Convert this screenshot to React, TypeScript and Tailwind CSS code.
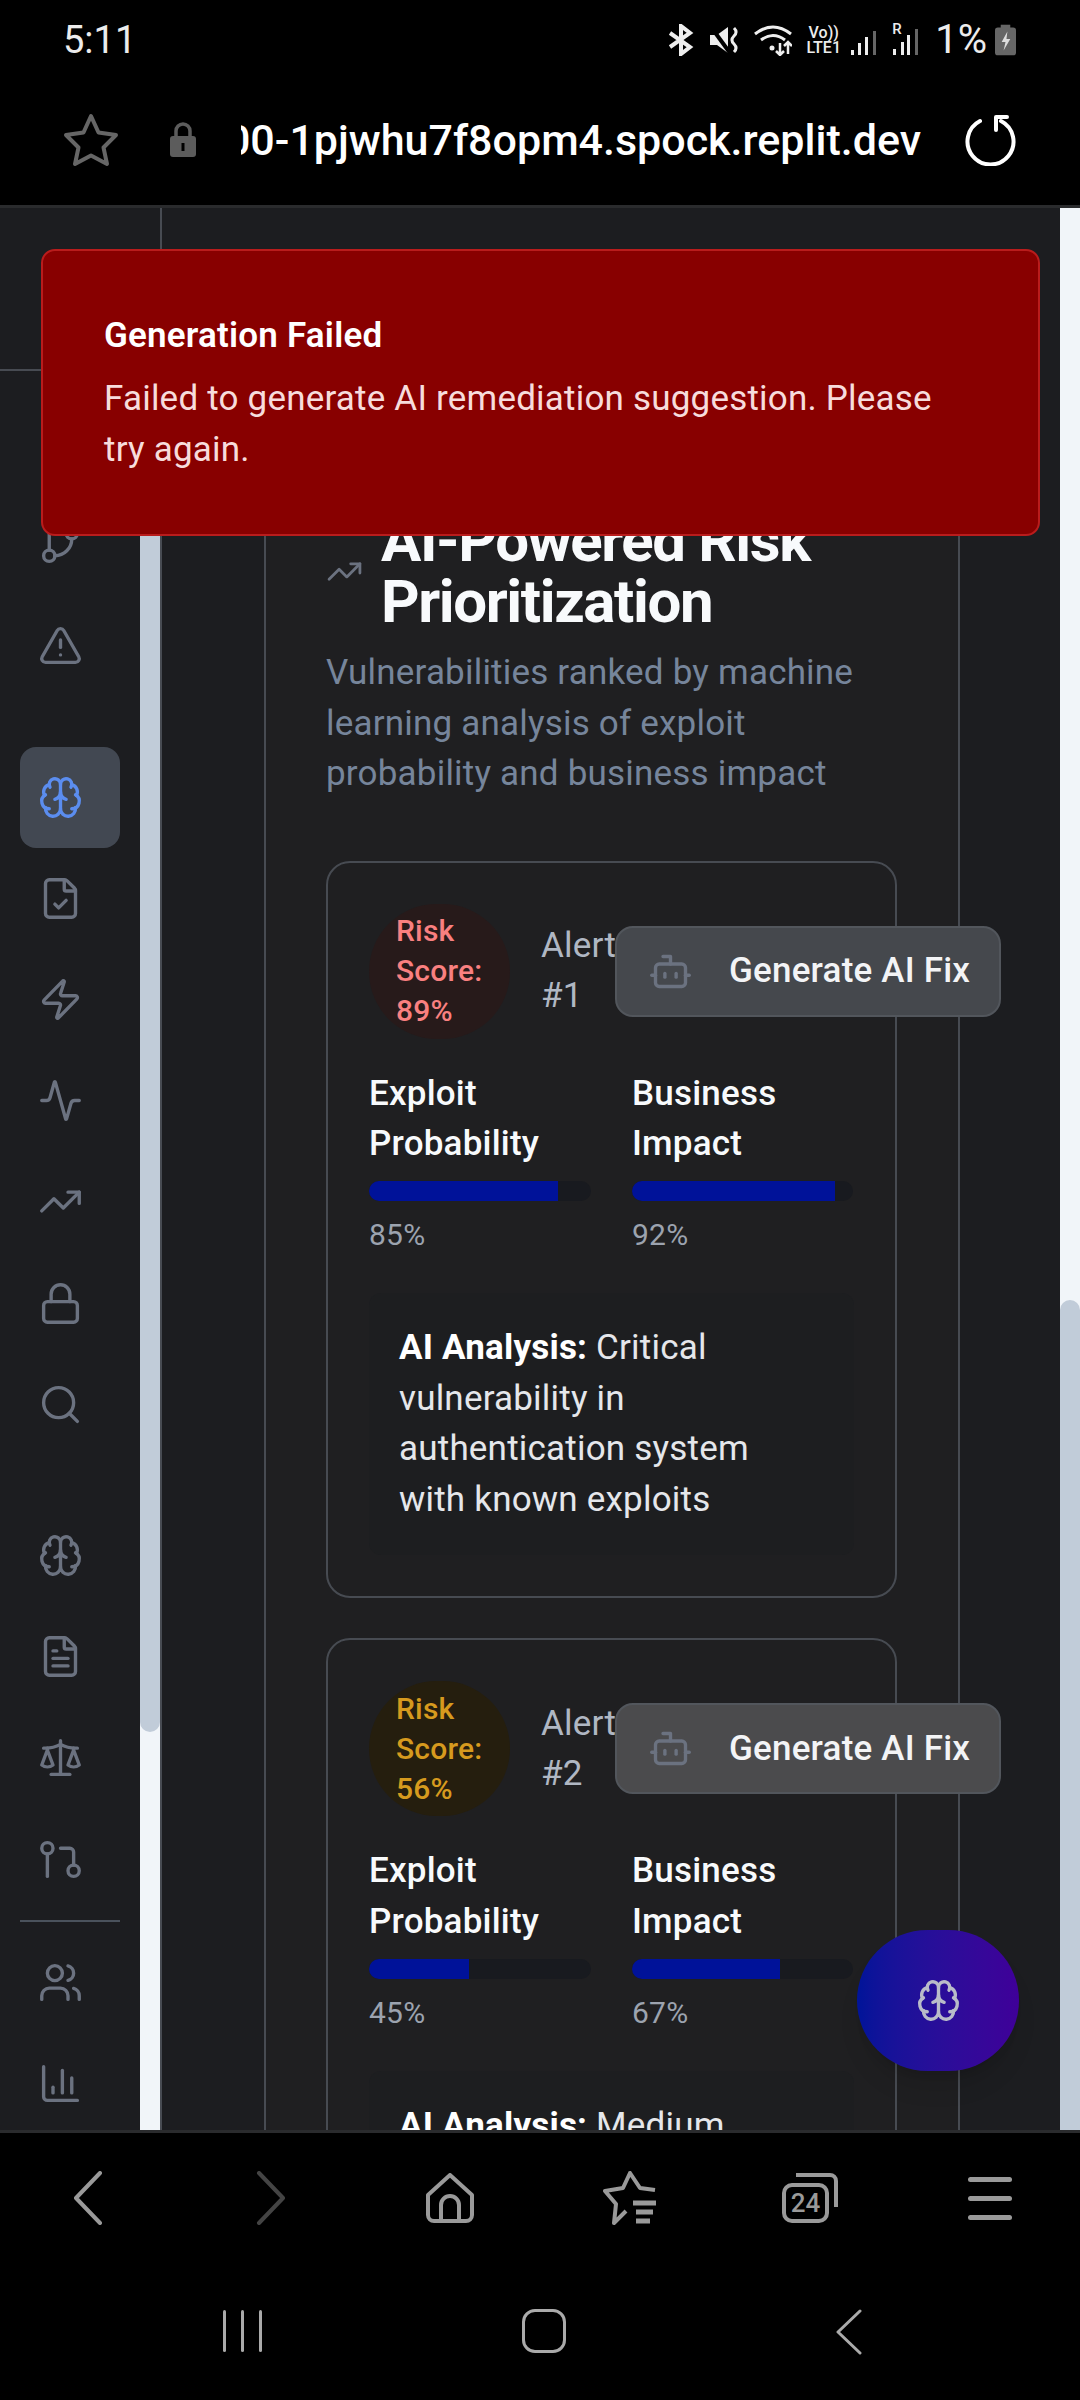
import React from "react";
import {
  Activity,
  Bot,
  Brain,
  ChartColumn,
  FileCheck,
  FileText,
  GitBranch,
  LayoutDashboard,
  Lock,
  Scale,
  Search,
  TrendingUp,
  TriangleAlert,
  Users,
  Zap,
} from "lucide-react";

const topGroup = [LayoutDashboard, GitBranch, TriangleAlert];
const middleGroup = [FileCheck, Zap, Activity, TrendingUp, Lock, Search];
const lowerGroup = [Brain, FileText, Scale];

const MergeIcon = () => (
  <svg viewBox="0 0 24 24" fill="none" stroke="currentColor" strokeWidth="2" strokeLinecap="round" strokeLinejoin="round" className="w-[45px] h-[45px]">
    <circle cx="5" cy="6" r="3" />
    <path d="M5 9v12" />
    <circle cx="19" cy="18" r="3" />
    <path d="M12 6h5a2 2 0 0 1 2 2v7" />
  </svg>
);

const NavItem = ({ children }: { children: React.ReactNode }) => (
  <div className="h-[101.200px] shrink-0 pl-[18px] flex items-center">{children}</div>
);

const StatusBar = () => (
  <div className="h-[90px] flex items-center pl-[63px] pr-[64px] pb-[10px] text-[#ececec] [font-family:Roboto,sans-serif]">
    <span className="text-[38px] leading-none">5:11</span>
    <div className="ml-auto flex items-center">
      <svg viewBox="0 0 26 32" className="w-[26px] h-[32px]" fill="none" stroke="#eee" strokeWidth="4">
        <path d="M2 9l20 14-9 7V2l9 7L2 23" />
      </svg>
      <svg viewBox="0 0 30 30" className="w-[30px] h-[30px] ml-[16px]">
        <path d="M0 10h7l11-8v26l-11-8H0z" fill="#eee" />
        <path d="M1 2l19 26" stroke="#000" strokeWidth="4" />
        <path d="M24 3q4 4 0 8t0 8q4 4 0 8" fill="none" stroke="#eee" strokeWidth="3" />
      </svg>
      <svg viewBox="0 0 38 32" className="w-[38px] h-[32px] ml-[14px]" fill="none" stroke="#eee" strokeWidth="3">
        <path d="M1 10q18-14 36 0" />
        <path d="M7 16q12-9 24 0" />
        <circle cx="18" cy="24" r="2.500" fill="#eee" stroke="none" />
        <path d="M26 19v12M22 27l4 4 4-4M34 30V18M30 22l4-4 4 4" strokeWidth="2.500" />
      </svg>
      <div className="ml-[13px] w-[37px] flex flex-col items-center text-[16px] leading-[15px] font-medium">
        <span>Vo))</span>
        <span>LTE1</span>
      </div>
      <svg viewBox="0 0 26 24" className="w-[26px] h-[24px] ml-[9px] mt-[6px]">
        <rect x="0" y="19" width="3" height="5" fill="#eee" />
        <rect x="7" y="12" width="3" height="12" fill="#eee" />
        <rect x="14" y="6" width="3" height="18" fill="#eee" />
        <rect x="22" y="0" width="3" height="24" fill="#666" />
      </svg>
      <div className="relative ml-[15px] w-[26px] h-[30px]">
        <span className="absolute left-0 -top-[3px] text-[15px] leading-none font-medium">R</span>
        <svg viewBox="0 0 26 30" className="w-[26px] h-[30px]">
          <rect x="1" y="24" width="3" height="6" fill="#eee" />
          <rect x="9" y="17" width="3" height="13" fill="#eee" />
          <rect x="15" y="10" width="3" height="20" fill="#eee" />
          <rect x="23" y="4" width="3" height="26" fill="#666" />
        </svg>
      </div>
      <span className="ml-[17px] text-[40px] leading-none">1%</span>
      <svg viewBox="0 0 22 32" className="w-[21px] h-[32px] ml-[8px]">
        <rect x="6" y="0" width="10" height="4" fill="#666" />
        <rect x="0" y="3" width="22" height="29" rx="3" fill="#666" />
        <path d="M13 7l-6 11h4l-2 9 7-12h-4z" fill="#ddd" />
      </svg>
    </div>
  </div>
);

const Toolbar = () => (
  <div className="h-[118px] border-b-[3px] border-[#2a2b2d] flex items-center pb-[16px]">
    <svg viewBox="0 0 56 54" className="w-[56px] h-[54px] ml-[63px]" fill="none" stroke="#666" strokeWidth="4" strokeLinejoin="round">
      <path d="M28 3l7.500 16.500L53 22 40.500 34.500 44 51 28 42.500 12 51l3.500-16.500L3 22l17.500-2.500z" />
    </svg>
    <svg viewBox="0 0 26 36" className="w-[26px] h-[36px] ml-[51px]">
      <path d="M6 15V9a7 7 0 0 1 14 0v6" fill="none" stroke="#5c5c5c" strokeWidth="3.500" />
      <rect x="0" y="14" width="26" height="21" rx="3" fill="#5c5c5c" />
      <rect x="11.500" y="21" width="3" height="8" fill="#000" />
    </svg>
    <div className="ml-[45px] w-[680px] overflow-hidden flex justify-end">
      <span className="shrink-0 text-[43px] leading-[50px] font-medium text-white whitespace-nowrap">00-1pjwhu7f8opm4.spock.replit.dev</span>
    </div>
    <svg viewBox="0 0 52 52" className="w-[52px] h-[52px] ml-[44px]" fill="none" stroke="#fff" strokeWidth="4" strokeLinecap="round">
      <path d="M15 7a23 23 0 1 0 21 0" />
      <path d="M31 3v13M31 3h11" />
    </svg>
  </div>
);

const Sidebar = () => (
  <div className="w-[162px] shrink-0 border-r-2 border-[#474b52] bg-[#1c1d20] flex flex-col">
    <div className="h-[163px] shrink-0 border-b-2 border-[#474b52]" />
    <div className="flex-1 flex min-h-0">
      <div className="w-[140px] px-[20px] pt-[22px] flex flex-col text-[#6b7280] [&_svg]:[stroke-width:1.8]">
        {topGroup.map((Icon, i) => (
          <NavItem key={i}>
            <Icon className="w-[45px] h-[45px]" />
          </NavItem>
        ))}
        <div className="h-[50px] shrink-0" />
        <div className="h-[101.200px] shrink-0 pl-[18px] rounded-[16px] bg-[#424852] flex items-center">
          <Brain className="w-[45px] h-[45px] text-[#5b8def]" />
        </div>
        {middleGroup.map((Icon, i) => (
          <NavItem key={i}>
            <Icon className="w-[45px] h-[45px]" />
          </NavItem>
        ))}
        <div className="h-[50px] shrink-0" />
        {lowerGroup.map((Icon, i) => (
          <NavItem key={i}>
            <Icon className="w-[45px] h-[45px]" />
          </NavItem>
        ))}
        <NavItem>
          <MergeIcon />
        </NavItem>
        <div className="h-[2px] shrink-0 my-[10px] bg-[#4a525c]" />
        <NavItem>
          <Users className="w-[45px] h-[45px]" />
        </NavItem>
        <NavItem>
          <ChartColumn className="w-[45px] h-[45px]" />
        </NavItem>
      </div>
      <div className="w-[20px] bg-[#f1f5f9] flex flex-col">
        <div className="h-[1361px] shrink-0 bg-[#c1ccd9] rounded-b-full" />
      </div>
    </div>
  </div>
);

type CardProps = {
  index: number;
  score: number;
  exploit: number;
  impact: number;
  analysis: string;
  circle: string;
  button: string;
};

const Meter = ({ label, second, value }: { label: string; second: string; value: number }) => (
  <div>
    <p className="text-[35px] leading-[50.600px] font-medium text-[#f8fafc]">
      {label}
      <br />
      {second}
    </p>
    <div className="mt-[11px] h-[20px] rounded-full bg-[#181a1f] overflow-hidden">
      <div className="h-full bg-[#001299]" style={{ width: `${value}%` }} />
    </div>
    <p className="mt-[14px] text-[30px] leading-[40px] text-[#9ca3af]">{value}%</p>
  </div>
);

const AlertCard = ({ index, score, exploit, impact, analysis, circle, button }: CardProps) => (
  <div className="border-2 border-[#474b52] rounded-[24px] px-[41px] pt-[41px] pb-[41px]">
    <div className="flex items-center">
      <div className={`w-[141px] h-[135px] shrink-0 rounded-full pl-[27px] flex items-center text-[30px] leading-[40px] font-medium ${circle}`}>
        <span>
          Risk
          <br />
          Score:
          <br />
          {score}%
        </span>
      </div>
      <p className="ml-[31px] w-[74px] shrink-0 overflow-hidden text-[35px] leading-[50px] text-[#b0b7c3] whitespace-nowrap">
        Alert
        <br />#{index}
      </p>
      <button className={`h-[91px] w-[386px] shrink-0 rounded-[18px] border-2 border-[#52565c] flex items-center pl-[31px] text-[35px] font-medium text-[#f3f4f6] ${button}`}>
        <Bot className="w-[45px] h-[45px] text-[#6b7280] shrink-0 [stroke-width:1.8]" />
        <span className="ml-[36px] whitespace-nowrap">Generate AI Fix</span>
      </button>
    </div>
    <div className="mt-[30px] grid grid-cols-[222px_221px] gap-x-[41px]">
      <Meter label="Exploit" second="Probability" value={exploit} />
      <Meter label="Business" second="Impact" value={impact} />
    </div>
    <div className="mt-[38px] bg-[#1d1e20] rounded-[12px] pl-[30px] pr-[45px] py-[30px] text-[35px] leading-[50.600px] text-[#e5e7eb]">
      <strong className="font-bold text-white">AI Analysis:</strong> {analysis}
    </div>
  </div>
);

const Main = () => (
  <div className="relative flex-1 min-w-0 bg-[#1c1d20] overflow-hidden pt-[230px] pl-[102px] pr-[102px]">
    <div className="w-[696px] border-x-2 border-[#474b52] bg-[#1f1f21] pl-[60px] pr-[61px] pt-[72px]">
      <div className="flex items-center gap-[18px]">
        <TrendingUp className="w-[37px] h-[37px] shrink-0 text-[#6b7280] [stroke-width:1.8]" />
        <h1 className="text-[60px] leading-[61px] font-bold text-[#f8fafc] tracking-[-1.400px]">
          AI-Powered Risk
          <br />
          Prioritization
        </h1>
      </div>
      <p className="mt-[16px] text-[35px] leading-[50.600px] text-[#76859b]">
        Vulnerabilities ranked by machine learning analysis of exploit probability and business impact
      </p>
      <div className="mt-[61px] flex flex-col gap-[40px]">
        <AlertCard
          index={1}
          score={89}
          exploit={85}
          impact={92}
          analysis="Critical vulnerability in authentication system with known exploits"
          circle="bg-[#271a1a] text-[#f98080]"
          button="bg-[#45484d]"
        />
        <AlertCard
          index={2}
          score={56}
          exploit={45}
          impact={67}
          analysis="Medium"
          circle="bg-[#251e0e] text-[#d69a1e]"
          button="bg-[#4b4b4d]"
        />
      </div>
    </div>
  </div>
);

const BottomBar = () => (
  <div className="border-t-[3px] border-[#2a2b2d]">
    <div className="h-[130px] grid grid-cols-6 items-center justify-items-center">
      <svg viewBox="0 0 30 54" className="w-[30px] h-[54px] mr-[5px]" fill="none" stroke="#9a9a9a" strokeWidth="4" strokeLinecap="round" strokeLinejoin="round">
        <path d="M27 2L3 27l24 25" />
      </svg>
      <svg viewBox="0 0 30 54" className="w-[30px] h-[54px] ml-[2px]" fill="none" stroke="#444" strokeWidth="4" strokeLinecap="round" strokeLinejoin="round">
        <path d="M3 2l24 25L3 52" />
      </svg>
      <svg viewBox="0 0 50 50" className="w-[50px] h-[50px]" fill="none" stroke="#9a9a9a" strokeWidth="4" strokeLinejoin="round">
        <path d="M25 2L3 22v20a6 6 0 0 0 6 6h32a6 6 0 0 0 6-6V22z" />
        <path d="M16 48V32a9 9 0 0 1 18 0v16" />
      </svg>
      <svg viewBox="0 0 56 54" className="w-[56px] h-[54px]" fill="none" stroke="#9a9a9a" strokeWidth="4" strokeLinejoin="round">
        <path d="M53 19l-15-2-10-15-7 15-18 3 11 13-2 19 12-12" />
        <path d="M31 32h23M34 41h17M34 50h14" strokeWidth="5" />
      </svg>
      <div className="relative w-[56px] h-[50px]">
        <svg viewBox="0 0 56 50" className="absolute inset-0 w-[56px] h-[50px]" fill="none" stroke="#9a9a9a" strokeWidth="4">
          <path d="M14 2h34a6 6 0 0 1 6 6v26" />
          <rect x="2" y="12" width="43" height="36" rx="8" />
        </svg>
        <span className="absolute left-[2px] top-[12px] w-[43px] h-[36px] flex items-center justify-center text-[26px] font-medium leading-none text-[#9a9a9a]">24</span>
      </div>
      <div className="w-[44px] flex flex-col gap-[14px]">
        <div className="h-[5px] rounded-full bg-[#9a9a9a]" />
        <div className="h-[5px] rounded-full bg-[#9a9a9a]" />
        <div className="h-[5px] rounded-full bg-[#9a9a9a]" />
      </div>
    </div>
    <div className="h-[137px] px-[92px] grid grid-cols-3 items-start justify-items-center pt-[46px]">
      <div className="flex gap-[15px] pt-[1px] ml-[2px]">
        <div className="w-[3px] h-[42px] rounded-full bg-[#aaa]" />
        <div className="w-[3px] h-[42px] rounded-full bg-[#aaa]" />
        <div className="w-[3px] h-[42px] rounded-full bg-[#aaa]" />
      </div>
      <div className="w-[44px] h-[44px] ml-[8px] rounded-[13px] border-[3px] border-[#aaa]" />
      <svg viewBox="0 0 26 46" className="w-[26px] h-[46px] ml-[20px]" fill="none" stroke="#aaa" strokeWidth="3" strokeLinecap="round" strokeLinejoin="round">
        <path d="M24 2L2 23l22 21" />
      </svg>
    </div>
  </div>
);

export default function App() {
  return (
    <div className="w-[1080px] h-[2400px] bg-black flex flex-col overflow-hidden [font-family:Roboto,sans-serif]">
      <StatusBar />
      <Toolbar />
      <div className="relative h-[1922px] shrink-0 flex overflow-hidden tracking-[0.2px]">
        <Sidebar />
        <Main />
        <div className="w-[20px] shrink-0 bg-[#f1f5f9] flex flex-col justify-end">
          <div className="h-[830px] bg-[#c1ccd9] rounded-t-full" />
        </div>

        <div className="absolute left-[41px] top-[41px] w-[999px] h-[287px] rounded-[14px] border-2 border-[#b91c1c] bg-[#880000] pl-[61px] pr-[80px] pt-[65px]">
          <p className="text-[35px] leading-[40px] font-semibold text-white">Generation Failed</p>
          <p className="mt-[17px] text-[35px] leading-[51px] text-[#f7dcdc]">
            Failed to generate AI remediation suggestion. Please try again.
          </p>
        </div>

        <div className="absolute left-[857px] top-[1722px] w-[162px] h-[141px] rounded-full bg-gradient-to-r from-[#001499] to-[#3f0099] shadow-xl flex items-center justify-center">
          <Brain className="w-[45px] h-[45px] text-[#b9bcc9] [stroke-width:1.8]" />
        </div>
      </div>
      <BottomBar />
    </div>
  );
}
